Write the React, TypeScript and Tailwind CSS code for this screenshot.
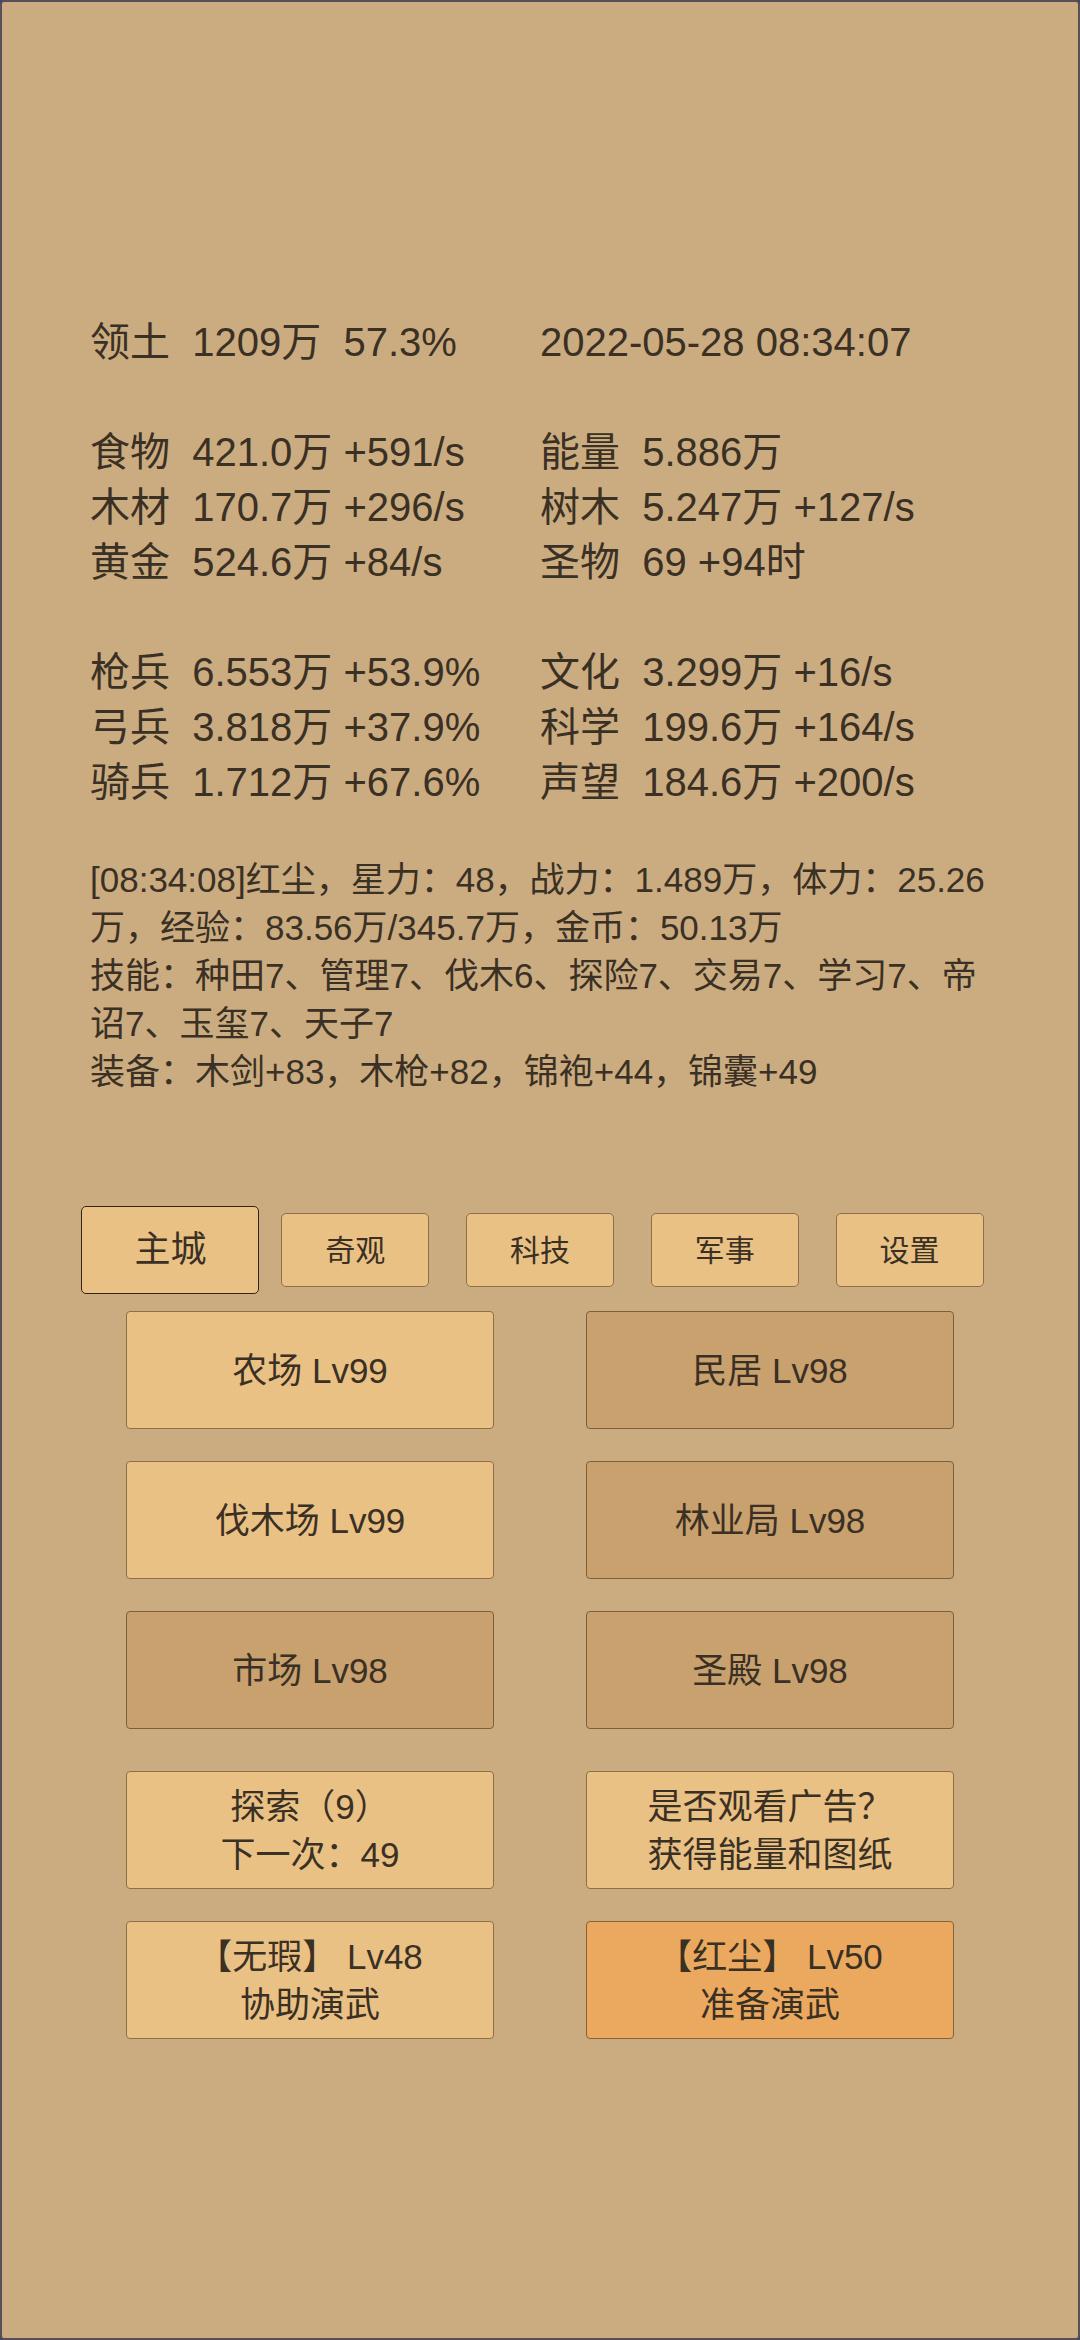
import { useState } from "react";
import clsx from "clsx";

type Stat = {
  label: string;
  value: string;
};

type Action = {
  lines: string[];
  tone: Tone;
};

type Tone = "ready" | "locked" | "alert";

const TONES: Record<Tone, string> = {
  ready: "bg-[#eac185] border-[#8f6f47]",
  locked: "bg-[#c9a16f] border-[#7d5f3a]",
  alert: "bg-[#eba95f] border-[#8a6034]",
};

const LAND: Stat = { label: "领土", value: "1209万  57.3%" };

const STAT_GROUPS: Stat[][] = [
  [
    { label: "食物", value: "421.0万 +591/s" },
    { label: "能量", value: "5.886万" },
    { label: "木材", value: "170.7万 +296/s" },
    { label: "树木", value: "5.247万 +127/s" },
    { label: "黄金", value: "524.6万 +84/s" },
    { label: "圣物", value: "69 +94时" },
  ],
  [
    { label: "枪兵", value: "6.553万 +53.9%" },
    { label: "文化", value: "3.299万 +16/s" },
    { label: "弓兵", value: "3.818万 +37.9%" },
    { label: "科学", value: "199.6万 +164/s" },
    { label: "骑兵", value: "1.712万 +67.6%" },
    { label: "声望", value: "184.6万 +200/s" },
  ],
];

const LOG = [
  "[08:34:08]红尘，星力：48，战力：1.489万，体力：25.26万，经验：83.56万/345.7万，金币：50.13万",
  "技能：种田7、管理7、伐木6、探险7、交易7、学习7、帝诏7、玉玺7、天子7",
  "装备：木剑+83，木枪+82，锦袍+44，锦囊+49",
];

const TABS = ["主城", "奇观", "科技", "军事", "设置"];

const BUILDINGS: Action[] = [
  { lines: ["农场 Lv99"], tone: "ready" },
  { lines: ["民居 Lv98"], tone: "locked" },
  { lines: ["伐木场 Lv99"], tone: "ready" },
  { lines: ["林业局 Lv98"], tone: "locked" },
  { lines: ["市场 Lv98"], tone: "locked" },
  { lines: ["圣殿 Lv98"], tone: "locked" },
];

const EVENTS: Action[] = [
  { lines: ["探索（9）", "下一次：49"], tone: "ready" },
  { lines: ["是否观看广告？", "获得能量和图纸"], tone: "ready" },
  { lines: ["【无瑕】 Lv48", "协助演武"], tone: "ready" },
  { lines: ["【红尘】 Lv50", "准备演武"], tone: "alert" },
];

function StatLine({ label, value }: Stat) {
  return (
    <p className="whitespace-pre">
      {label}
      {"  "}
      {value}
    </p>
  );
}

function ActionGrid({ actions }: { actions: Action[] }) {
  return (
    <div className="grid grid-cols-2 gap-x-[92px] gap-y-8 px-[124px]">
      {actions.map((action) => (
        <button
          key={action.lines[0]}
          type="button"
          className={clsx(
            "h-[118px] rounded-[4px] border pt-0.5 text-[35px] leading-[48px] cursor-pointer",
            TONES[action.tone]
          )}
        >
          {action.lines.map((line) => (
            <span key={line} className="block whitespace-pre">
              {line}
            </span>
          ))}
        </button>
      ))}
    </div>
  );
}

export default function App() {
  const [tab, setTab] = useState(TABS[0]);

  return (
    <div lang="zh-CN" className="bg-[#2b4376]">
      <main className="min-h-screen rounded-[4px] border-2 border-[#5a4f58] bg-[#cbac81] pt-[313px] pb-20 font-['Liberation_Sans','Noto_Sans_CJK_SC',sans-serif] text-[#3a3024]">
        <section className="flex flex-col gap-[55px] px-[88px] text-[40px] leading-[55px]">
          <div className="grid grid-cols-2">
            <StatLine {...LAND} />
            <time dateTime="2022-05-28T08:34:07">2022-05-28 08:34:07</time>
          </div>
          {STAT_GROUPS.map((group) => (
            <div key={group[0].label} className="grid grid-cols-2">
              {group.map((stat) => (
                <StatLine key={stat.label} {...stat} />
              ))}
            </div>
          ))}
        </section>

        <section className="mt-[46px] px-[88px] text-[35px] leading-[48px]">
          {LOG.map((entry) => (
            <p key={entry}>{entry}</p>
          ))}
        </section>

        <nav className="mt-[110px] flex h-[88px] items-center px-[76px]">
          {TABS.map((name) => (
            <div key={name} className="flex flex-1 justify-center">
              <button
                type="button"
                onClick={() => setTab(name)}
                className={clsx(
                  "rounded-[5px] border bg-[#eac185] cursor-pointer",
                  name === tab
                    ? "h-[88px] w-[178px] border-[#33241a] text-[36px]"
                    : "h-[74px] w-[148px] border-[#8f6f47] text-[30px]"
                )}
              >
                {name}
              </button>
            </div>
          ))}
        </nav>

        <div className="mt-[17px] flex flex-col gap-[42px]">
          <ActionGrid actions={BUILDINGS} />
          <ActionGrid actions={EVENTS} />
        </div>
      </main>
    </div>
  );
}
